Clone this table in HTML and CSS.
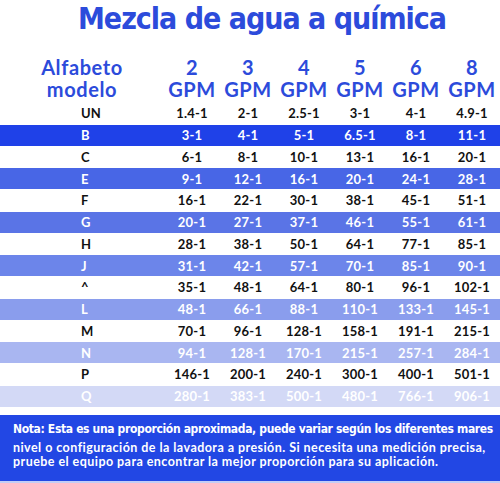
FILE: index.html
```html
<!DOCTYPE html>
<html lang="es">
  <head>
    <meta charset="UTF-8" />
    <meta name="viewport" content="width=device-width, initial-scale=1.0" />
    <title>Mezcla de agua a química</title>
    <link rel="stylesheet" href="styles.css">
  </head>
  <body>
    <main class="sheet">
      <h1 class="title">Mezcla de agua a química</h1>
      <table class="ratios">
        <thead>
          <tr>
            <th class="model">Alfabeto<br />modelo</th>
            <th>2<br />GPM</th>
            <th>3<br />GPM</th>
            <th>4<br />GPM</th>
            <th>5<br />GPM</th>
            <th>6<br />GPM</th>
            <th>8<br />GPM</th>
          </tr>
        </thead>
        <tbody>
          <tr class="plain"><td>UN</td><td>1.4-1</td><td>2-1</td><td>2.5-1</td><td>3-1</td><td>4-1</td><td>4.9-1</td></tr>
          <tr class="shade s1"><td>B</td><td>3-1</td><td>4-1</td><td>5-1</td><td>6.5-1</td><td>8-1</td><td>11-1</td></tr>
          <tr class="plain"><td>C</td><td>6-1</td><td>8-1</td><td>10-1</td><td>13-1</td><td>16-1</td><td>20-1</td></tr>
          <tr class="shade s2"><td>E</td><td>9-1</td><td>12-1</td><td>16-1</td><td>20-1</td><td>24-1</td><td>28-1</td></tr>
          <tr class="plain"><td>F</td><td>16-1</td><td>22-1</td><td>30-1</td><td>38-1</td><td>45-1</td><td>51-1</td></tr>
          <tr class="shade s3"><td>G</td><td>20-1</td><td>27-1</td><td>37-1</td><td>46-1</td><td>55-1</td><td>61-1</td></tr>
          <tr class="plain"><td>H</td><td>28-1</td><td>38-1</td><td>50-1</td><td>64-1</td><td>77-1</td><td>85-1</td></tr>
          <tr class="shade s4"><td>J</td><td>31-1</td><td>42-1</td><td>57-1</td><td>70-1</td><td>85-1</td><td>90-1</td></tr>
          <tr class="plain"><td>^</td><td>35-1</td><td>48-1</td><td>64-1</td><td>80-1</td><td>96-1</td><td>102-1</td></tr>
          <tr class="shade s5"><td>L</td><td>48-1</td><td>66-1</td><td>88-1</td><td>110-1</td><td>133-1</td><td>145-1</td></tr>
          <tr class="plain"><td>M</td><td>70-1</td><td>96-1</td><td>128-1</td><td>158-1</td><td>191-1</td><td>215-1</td></tr>
          <tr class="shade s6"><td>N</td><td>94-1</td><td>128-1</td><td>170-1</td><td>215-1</td><td>257-1</td><td>284-1</td></tr>
          <tr class="plain"><td>P</td><td>146-1</td><td>200-1</td><td>240-1</td><td>300-1</td><td>400-1</td><td>501-1</td></tr>
          <tr class="shade s7"><td>Q</td><td>280-1</td><td>383-1</td><td>500-1</td><td>480-1</td><td>766-1</td><td>906-1</td></tr>
        </tbody>
      </table>
      <div class="note">
        <p class="note-lead">Nota: Esta es una proporción aproximada, puede variar según los diferentes mares</p>
        <p class="note-body">nivel o configuración de la lavadora a presión. Si necesita una medición precisa,<br />pruebe el equipo para encontrar la mejor proporción para su aplicación.</p>
      </div>
    </main>
  </body>
</html>
```

FILE: styles.css
```css
* {
  margin: 0;
  padding: 0;
  box-sizing: border-box;
}
body {
  background: #fff;
  font-family: Lato, "Open Sans", sans-serif;
}
.sheet {
  width: 500px;
  height: 483px;
  display: flex;
  flex-direction: column;
  border-bottom: 2px solid #c3cdf5;
}
.title {
  font-family: "Liberation Sans Narrow", "DejaVu Sans Condensed", sans-serif;
  font-size: 30px;
  letter-spacing: -1px;
  font-weight: 700;
  color: #2c4bdb;
  text-align: center;
  line-height: 38px;
  height: 50px;
  padding-left: 24px;
}
.ratios {
  width: 500px;
  border-collapse: collapse;
  table-layout: fixed;
}
.ratios th {
  color: #2c4bdb;
  font-size: 20px;
  font-weight: 700;
  letter-spacing: 0.6px;
  line-height: 22px;
  height: 52px;
  padding-bottom: 2px;
  text-align: center;
  vertical-align: bottom;
  width: 56px;
}
.ratios th.model {
  width: 164px;
}
.ratios td {
  font-size: 13px;
  font-weight: 700;
  letter-spacing: 0.2px;
  color: #111;
  text-align: center;
}
.ratios td:first-child {
  text-align: left;
  padding-left: 81px;
}
.plain td {
  height: 22.5px;
}
.shade td {
  height: 21px;
  color: #fff;
}
.s1 { background: #1f41e8; }
.s2 { background: #4866e6; }
.s3 { background: #5a74e6; }
.s4 { background: #6c85ea; }
.s5 { background: #8a9ded; }
.s6 { background: #a9b6f1; }
.s7 { background: #d3d9f6; }
.note {
  margin-top: 8px;
  flex: 1;
  background: #2247e4;
  color: #fff;
  padding: 6px 13px 0;
  white-space: nowrap;
}
.note-lead {
  font-family: "Liberation Sans Narrow", "DejaVu Sans Condensed", sans-serif;
  font-size: 12px;
  letter-spacing: -0.35px;
  font-weight: 700;
  line-height: 16px;
}
.note-body {
  margin-top: 4px;
  font-size: 12.5px;
  font-weight: 700;
  letter-spacing: 0.45px;
  line-height: 14px;
}
```
